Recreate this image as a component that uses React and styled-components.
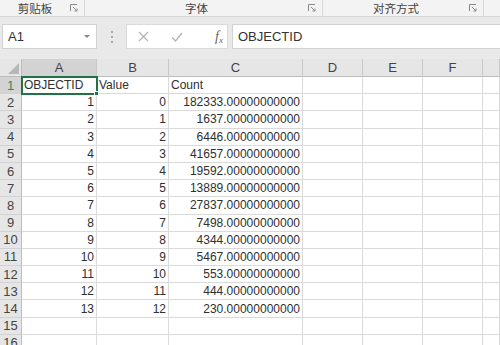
import React from 'react'
import styled, { createGlobalStyle, css } from 'styled-components'

const Global = createGlobalStyle`
    html, body {
        margin: 0;
        padding: 0;
        width: 500px;
        height: 345px;
        overflow: hidden;
        background: #ffffff;
    }
    * {
        box-sizing: border-box;
    }
`

const Page = styled.div`
    width: 500px;
    height: 345px;
    overflow: hidden;
    font-family: 'Liberation Sans', 'Noto Sans CJK SC', sans-serif;
    color: #333333;
`

const Ribbon = styled.div`
    display: flex;
    height: 17px;
    background: #f3f3f3;
    border-bottom: 1px solid #d6d6d6;
`

const Group = styled.div`
    display: flex;
    align-items: center;
    width: ${props => props.width}px;
    border-right: 1px solid #d8d8d8;
    padding: 0 6px 0 0;
    ${props => props.last && css`
        flex: 1;
        border-right: none;
    `}
`

const GroupLabel = styled.span`
    flex: 1;
    text-align: center;
    font-family: 'Noto Sans CJK SC', sans-serif;
    font-size: 11.5px;
    line-height: 16px;
    color: #444444;
`

const FormulaArea = styled.div`
    display: flex;
    align-items: center;
    height: 42px;
    padding: 7px 0 10px 2px;
    background: #e9e9e9;
`

const NameBox = styled.div`
    display: flex;
    align-items: center;
    justify-content: space-between;
    width: 95px;
    height: 25px;
    background: #ffffff;
    border: 1px solid #d2d2d2;
    padding: 0 6px 0 5px;
    font-size: 13px;
    color: #333333;
`

const Dots = styled.div`
    display: flex;
    flex-direction: column;
    gap: 3px;
    margin: 0 13px 0 14px;

    span {
        width: 2px;
        height: 2px;
        background: #a8a8a8;
    }
`

const FxButtons = styled.div`
    display: flex;
    align-items: center;
    width: 102px;
    height: 25px;
    background: #ffffff;
    border: 1px solid #dadada;
    padding: 0 0 0 11px;
    gap: 22px;
`

const Fx = styled.span`
    font-family: 'Liberation Serif', serif;
    font-style: italic;
    font-size: 14px;
    color: #666666;
    margin-left: 10px;

    sub {
        font-size: 9px;
        vertical-align: -2px;
    }
`

const FormulaInput = styled.div`
    flex: 1;
    height: 25px;
    margin-left: 4px;
    background: #ffffff;
    border: 1px solid #d2d2d2;
    border-right: none;
    padding: 0 5px;
    font-size: 13px;
    line-height: 23px;
    color: #333333;
`

const Sheet = styled.div`
    display: grid;
    grid-template-columns: 22px 75px 72px 134px 60px 60px 60px 1fr;
    grid-template-rows: 18px;
    grid-auto-rows: 17.2px;
    background: #ffffff;
`

const ColHead = styled.div`
    display: flex;
    align-items: center;
    justify-content: center;
    background: ${props => (props.selected ? '#d3d3d3' : '#e6e6e6')};
    border-right: 1px solid #c9c9c9;
    border-bottom: 1px solid ${props => (props.selected ? '#217346' : '#bdbdbd')};
    font-size: 13px;
    color: #444444;
`

const Corner = styled.div`
    position: relative;
    background: #e6e6e6;
    border-right: 1px solid #bdbdbd;
    border-bottom: 1px solid #bdbdbd;

    &::after {
        content: '';
        position: absolute;
        right: 2px;
        bottom: 2px;
        border-left: 11px solid transparent;
        border-bottom: 11px solid #b7b7b7;
    }
`

const RowHead = styled.div`
    display: flex;
    align-items: center;
    justify-content: center;
    background: ${props => (props.selected ? '#d3d3d3' : '#e6e6e6')};
    border-right: 1px solid ${props => (props.selected ? '#217346' : '#bdbdbd')};
    border-bottom: 1px solid #d2d2d2;
    font-size: 13px;
    color: ${props => (props.selected ? '#2e8b57' : '#444444')};
`

const Cell = styled.div`
    position: relative;
    display: flex;
    align-items: center;
    justify-content: ${props => (props.num ? 'flex-end' : 'flex-start')};
    padding: 0 2px 0 2px;
    border-right: 1px solid #dadada;
    border-bottom: 1px solid #dadada;
    font-size: 12px;
    color: #2f2f2f;
    white-space: nowrap;

    ${props => props.active && css`
        outline: 2px solid #217346;
        outline-offset: -1px;
        z-index: 1;
    `}
`

const Handle = styled.span`
    position: absolute;
    right: -3px;
    bottom: -3px;
    width: 5px;
    height: 5px;
    background: #217346;
    border: 1px solid #ffffff;
`

const Launcher = () => (
    <svg width="8" height="8" viewBox="0 0 8 8">
        <path d="M0.5 7 V0.5 H7" fill="none" stroke="#8a8a8a" strokeWidth="1" />
        <path d="M3 3 L7 7 M7 4.5 V7 H4.5" fill="none" stroke="#8a8a8a" strokeWidth="1" />
    </svg>
)

const rows = [
    [1, 0, '182333'],
    [2, 1, '1637'],
    [3, 2, '6446'],
    [4, 3, '41657'],
    [5, 4, '19592'],
    [6, 5, '13889'],
    [7, 6, '27837'],
    [8, 7, '7498'],
    [9, 8, '4344'],
    [10, 9, '5467'],
    [11, 10, '553'],
    [12, 11, '444'],
    [13, 12, '230'],
]

const columns = ['A', 'B', 'C', 'D', 'E', 'F', '']

function EmptyCells() {
    return [0, 1, 2, 3].map(i => <Cell key={i} />)
}

function App() {
    return (
        <Page>
            <Global />
            <Ribbon>
                <Group width={85}>
                    <GroupLabel>剪贴板</GroupLabel>
                    <Launcher />
                </Group>
                <Group width={238}>
                    <GroupLabel>字体</GroupLabel>
                    <Launcher />
                </Group>
                <Group width={161}>
                    <GroupLabel>对齐方式</GroupLabel>
                    <Launcher />
                </Group>
                <Group last />
            </Ribbon>

            <FormulaArea>
                <NameBox>
                    A1
                    <svg width="6" height="3" viewBox="0 0 6 3">
                        <path d="M0 0 H6 L3 3 Z" fill="#888888" />
                    </svg>
                </NameBox>
                <Dots>
                    <span />
                    <span />
                    <span />
                </Dots>
                <FxButtons>
                    <svg width="11" height="11" viewBox="0 0 11 11">
                        <path d="M1 1 L10 10 M10 1 L1 10" stroke="#b4b4b4" strokeWidth="1.2" />
                    </svg>
                    <svg width="12" height="10" viewBox="0 0 12 10">
                        <path d="M1 5.5 L4.5 9 L11 1" fill="none" stroke="#b4b4b4" strokeWidth="1.3" />
                    </svg>
                    <Fx>f<sub>x</sub></Fx>
                </FxButtons>
                <FormulaInput>OBJECTID</FormulaInput>
            </FormulaArea>

            <Sheet>
                <Corner />
                {columns.map((c, i) => (
                    <ColHead key={i} selected={c === 'A'}>{c}</ColHead>
                ))}

                <RowHead selected>1</RowHead>
                <Cell active>OBJECTID<Handle /></Cell>
                <Cell>Value</Cell>
                <Cell>Count</Cell>
                <EmptyCells />

                {rows.map(([id, value, count], i) => (
                    <React.Fragment key={id}>
                        <RowHead>{i + 2}</RowHead>
                        <Cell num>{id}</Cell>
                        <Cell num>{value}</Cell>
                        <Cell num>{count}.00000000000</Cell>
                        <EmptyCells />
                    </React.Fragment>
                ))}

                {[15, 16].map(n => (
                    <React.Fragment key={n}>
                        <RowHead>{n}</RowHead>
                        <Cell />
                        <Cell />
                        <Cell />
                        <EmptyCells />
                    </React.Fragment>
                ))}
            </Sheet>
        </Page>
    )
}

export default App
